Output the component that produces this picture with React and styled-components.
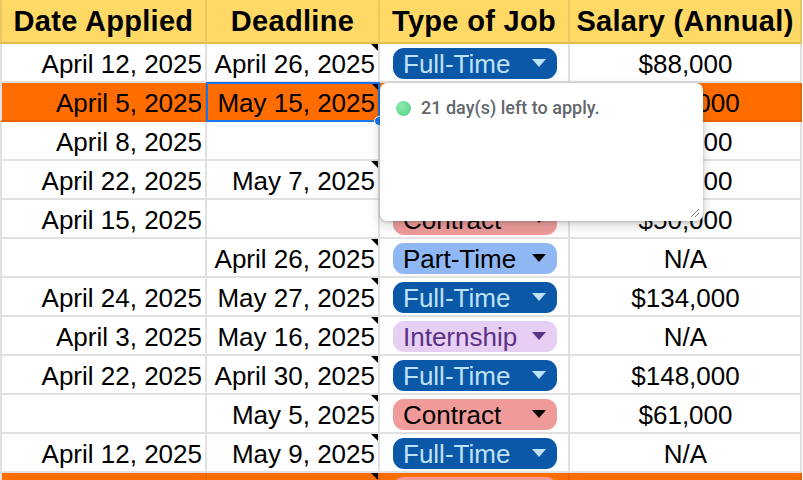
import React from "react";
import styled, { createGlobalStyle, css } from "styled-components";

const GlobalStyle = createGlobalStyle`
  html, body {
    margin: 0;
    padding: 0;
    overflow: hidden;
    background: #ffffff;
  }
  body {
    font-family: "Liberation Sans", Arial, sans-serif;
    color: #000;
  }
`;

const GRID = "207px 173px 190px 232px";
const LINE = "#e1e1e1";
const HOT_LINE = "#e86400";

const Sheet = styled.div`
  position: relative;
  width: 802px;
`;

const HeaderRow = styled.div`
  display: grid;
  grid-template-columns: ${GRID};
  height: 44px;
  background: #ffd966;
`;

const HeaderCell = styled.div`
  box-sizing: border-box;
  display: flex;
  align-items: center;
  justify-content: center;
  padding-top: 1px;
  border-right: 2px solid #ecc760;
  border-bottom: 2px solid #e4bb52;
  ${(p) => p.$first && css`border-left: 2px solid #ecc760;`}
  font-weight: 700;
  font-size: 29px;
  letter-spacing: 0.3px;
  white-space: nowrap;
`;

const Row = styled.div`
  display: grid;
  grid-template-columns: ${GRID};
  height: 39px;
  background: ${(p) => (p.$hot ? "#ff6d01" : "#ffffff")};
`;

const Cell = styled.div`
  position: relative;
  box-sizing: border-box;
  display: flex;
  align-items: ${(p) => (p.$chip ? "center" : "flex-end")};
  justify-content: ${(p) =>
    p.$align === "right" ? "flex-end" : p.$align === "center" ? "center" : "flex-start"};
  padding: ${(p) => (p.$chip ? "2px 0 0 13px" : "0 3px 2px 4px")};
  border-right: 2px solid ${(p) => (p.$hot ? HOT_LINE : LINE)};
  border-bottom: 2px solid ${(p) => (p.$hot ? HOT_LINE : LINE)};
  ${(p) => p.$first && css`border-left: 2px solid ${LINE};`}
  font-size: 26px;
  line-height: 29px;
  white-space: nowrap;
`;

const NoteMark = styled.span`
  position: absolute;
  top: 0;
  right: 0;
  width: 0;
  height: 0;
  border-top: 7px solid #000;
  border-left: 7px solid transparent;
`;

const Selection = styled.span`
  position: absolute;
  left: -1px;
  top: -1px;
  right: -2px;
  bottom: -2px;
  border: 2px solid #1a73e8;
  pointer-events: none;
  z-index: 2;
`;

const Handle = styled.span`
  position: absolute;
  right: -6px;
  bottom: -6px;
  width: 8px;
  height: 8px;
  border-radius: 50%;
  background: #1a73e8;
  border: 1px solid #ffffff;
  z-index: 3;
`;

const chipColors = {
  "Full-Time": { bg: "#0b57a8", fg: "#bfe1f6" },
  "Part-Time": { bg: "#8fb7f4", fg: "#000000" },
  Contract: { bg: "#f09b9a", fg: "#000000" },
  Internship: { bg: "#e6cff2", fg: "#5a3286" },
};

const Chip = styled.div`
  box-sizing: border-box;
  width: 164px;
  height: 31px;
  border-radius: 11px;
  padding: 1px 11px 0 10px;
  display: flex;
  align-items: center;
  justify-content: space-between;
  background: ${(p) => chipColors[p.$type].bg};
  color: ${(p) => chipColors[p.$type].fg};
  font-size: 26px;
  line-height: 30px;
`;

const Caret = styled.span`
  width: 0;
  height: 0;
  border-left: 7px solid transparent;
  border-right: 7px solid transparent;
  border-top: 8px solid ${(p) => chipColors[p.$type].fg};
  margin-bottom: 2px;
`;

const Popup = styled.div`
  position: absolute;
  left: 380px;
  top: 83px;
  width: 323px;
  height: 138px;
  box-sizing: border-box;
  background: #ffffff;
  border-radius: 7px;
  box-shadow: 0 1px 3px rgba(60, 64, 67, 0.3), 0 4px 8px 3px rgba(60, 64, 67, 0.15);
  padding: 14px 16px;
  z-index: 5;
`;

const PopupLine = styled.div`
  display: flex;
  align-items: center;
  gap: 10px;
  font-family: Roboto, "Noto Sans", sans-serif;
  font-weight: 500;
  font-size: 18px;
  line-height: 22px;
  color: #62666a;
`;

const Dot = styled.span`
  width: 15px;
  height: 15px;
  border-radius: 50%;
  background: radial-gradient(circle at 35% 35%, #8cecae 0%, #6bdc96 55%, #52c283 100%);
  flex: none;
`;

const Resize = styled.svg`
  position: absolute;
  right: 3px;
  bottom: 3px;
`;

const rows = [
  { applied: "April 12, 2025", deadline: "April 26, 2025", type: "Full-Time", salary: "$88,000" },
  { applied: "April 5, 2025", deadline: "May 15, 2025", type: "Full-Time", salary: "$105,000", hot: true, selected: true },
  { applied: "April 8, 2025", deadline: "", type: "Part-Time", salary: "$64,000" },
  { applied: "April 22, 2025", deadline: "May 7, 2025", type: "Full-Time", salary: "$92,000" },
  { applied: "April 15, 2025", deadline: "", type: "Contract", salary: "$50,000" },
  { applied: "", deadline: "April 26, 2025", type: "Part-Time", salary: "N/A" },
  { applied: "April 24, 2025", deadline: "May 27, 2025", type: "Full-Time", salary: "$134,000" },
  { applied: "April 3, 2025", deadline: "May 16, 2025", type: "Internship", salary: "N/A" },
  { applied: "April 22, 2025", deadline: "April 30, 2025", type: "Full-Time", salary: "$148,000" },
  { applied: "", deadline: "May 5, 2025", type: "Contract", salary: "$61,000" },
  { applied: "April 12, 2025", deadline: "May 9, 2025", type: "Full-Time", salary: "N/A" },
  { applied: "April 2, 2025", deadline: "May 2, 2025", type: "Contract", salary: "$70,000", hot: true },
];

export default function App() {
  return (
    <>
      <GlobalStyle />
      <Sheet>
        <HeaderRow>
          <HeaderCell $first>Date Applied</HeaderCell>
          <HeaderCell>Deadline</HeaderCell>
          <HeaderCell>Type of Job</HeaderCell>
          <HeaderCell>Salary (Annual)</HeaderCell>
        </HeaderRow>
        {rows.map((r, i) => (
          <Row key={i} $hot={r.hot}>
            <Cell $first $align="right" $hot={r.hot}>
              {r.applied}
            </Cell>
            <Cell $align="right" $hot={r.hot}>
              {r.deadline}
              {r.deadline && <NoteMark />}
              {r.selected && (
                <>
                  <Selection />
                  <Handle />
                </>
              )}
            </Cell>
            <Cell $chip $hot={r.hot}>
              <Chip $type={r.type}>
                <span>{r.type}</span>
                <Caret $type={r.type} />
              </Chip>
            </Cell>
            <Cell $align="center" $hot={r.hot}>
              {r.salary}
            </Cell>
          </Row>
        ))}
        <Popup>
          <PopupLine>
            <Dot />
            <span>21 day(s) left to apply.</span>
          </PopupLine>
          <Resize width="10" height="10" viewBox="0 0 10 10">
            <path d="M1 9 L9 1 M5 9 L9 5" stroke="#80868b" strokeWidth="1" fill="none" />
          </Resize>
        </Popup>
      </Sheet>
    </>
  );
}
